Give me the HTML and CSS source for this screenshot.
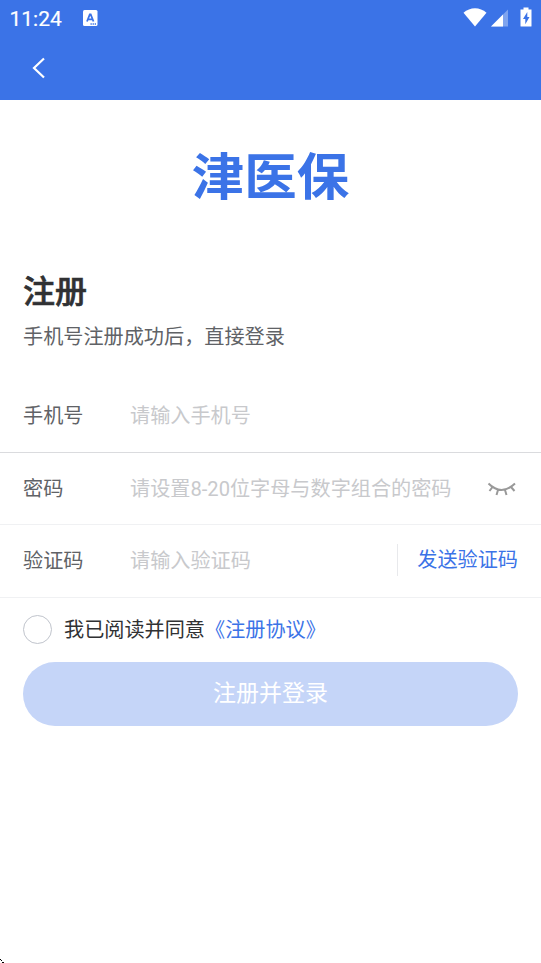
FILE: index.html
```html
<!DOCTYPE html>
<html lang="zh-CN">
<head>
<meta charset="utf-8">
<title>注册</title>
<link rel="stylesheet" href="styles.css">
</head>
<body>
<header class="top">
  <div class="status">
    <span class="clock">11:24</span>
    <svg class="badge" width="15" height="16" viewBox="0 0 15 16"><rect width="14.5" height="16" rx="1.5" fill="#fff"/><path d="M4 11.5 6.8 4.5h.9l2.8 7M5 9.3h4.5" fill="none" stroke="#3b73e7" stroke-width="1.8"/><path d="M7.5 14h6" stroke="#3b73e7" stroke-width="1.5" stroke-dasharray="1.3 .8"/></svg>
    <svg class="signals" width="70" height="22" viewBox="0 0 70 22"><path d="M.5 5.8C7-.2 17-.2 23.500 5.800L12 19.500Z" fill="#fff"/><path d="M28 19.500 45 2.500V19.500Z" fill="#fff" opacity=".35"/><path d="M28 19.500 40 7.500V19.500Z" fill="#fff"/><path d="M57.500 2.500h3v-2h5v2h3V19q0 .5-.5.5h-10q-.5 0-.5-.5Z" fill="#fff"/><path d="M64.300 5 60 12h2.300v5.300L66.500 10h-2.200Z" fill="#3b73e7"/></svg>
  </div>
  <div class="nav"><svg width="14" height="22" viewBox="0 0 14 22"><path d="M12 1.500 2 11l10 9.500" fill="none" stroke="#fff" stroke-width="2.200"/></svg></div>
</header>
<main>
  <div class="logo">津医保</div>
  <h1>注册</h1>
  <p class="intro">手机号注册成功后，直接登录</p>
  <div class="row phone"><span class="label">手机号</span><span class="hint">请输入手机号</span></div>
  <div class="row"><span class="label">密码</span><span class="hint">请设置8-20位字母与数字组合的密码</span>
    <svg class="eye" width="30" height="16" viewBox="0 0 30 16"><path d="M1.500 2.500Q14.500 15.500 28 2.500M5.500 6 2.500 10M11 9 9.500 14M18 9l1.500 5M24 6l3.500 4" fill="none" stroke="#999" stroke-width="2"/></svg>
  </div>
  <div class="row code"><span class="label">验证码</span><span class="hint">请输入验证码</span><span class="send">发送验证码</span></div>
  <div class="agree"><span class="radio"></span><span class="terms">我已阅读并同意<a>《注册协议》</a></span></div>
  <div class="submit">注册并登录</div>
</main>
<svg class="corner" width="4" height="4" viewBox="0 0 4 4"><path d="M0 0h1v1h1v1H1V1H0ZM2 3h2v1H2Z" fill="#000"/></svg>
</body>
</html>
```
FILE: styles.css
```css
* { box-sizing: border-box; }
body {
  margin: 0;
  height: 963px;
  overflow: hidden;
  position: relative;
  background: #fff;
  color: #606266;
  font: 400 20.15px/30px Roboto, "Noto Sans CJK SC", sans-serif;
  white-space: nowrap;
}
.top { height: 100px; background: #3b73e7; color: #fff; }
.status { height: 37px; display: flex; align-items: center; padding: 0 8px 0 9.500px; }
.clock { width: 73px; font-size: 21px; font-weight: 400; -webkit-text-stroke: .2px; }
.badge { margin-top: -1px; }
.signals { margin-left: auto; margin-top: -1px; }
.nav { padding: 20px 0 0 32px; height: 63px; }
.nav svg { display: block; }
.logo {
  height: 154px;
  padding-top: 40px;
  text-align: center;
  font-size: 53px;
  line-height: 76px;
  font-weight: 700;
  color: #3b73e7;
  transform: scale(.99, .94);
}
h1 { margin: 0; padding: 14px 23px 0; font-size: 32px; line-height: 48px; height: 68px; font-weight: 500; -webkit-text-stroke: .6px; color: #303133; }
.intro { margin: 0; padding-left: 23px; height: 58px; }
.row {
  height: 72px;
  display: flex;
  align-items: center;
  padding: 0 23px;
  border-bottom: 1px solid #f0f1f3;
}
.phone { height: 73px; border-color: #dadbde; }
.code { height: 73px; }
.label { width: 107px; }
.hint { color: #c8c9cc; }
.eye { margin-left: auto; margin-right: 1px; }
.send { margin: -2px 0 0 auto; padding-left: 19.500px; border-left: 1px solid #e8e9ec; color: #3b73e7; line-height: 32px; }
.agree { height: 64px; display: flex; align-items: center; padding: 0 23px; color: #303133; }
.radio { width: 29px; height: 29px; margin: -2px 12px 0 0; border: 1.500px solid #c0c4cc; border-radius: 50%; }
.agree a { color: #3b73e7; }
.submit { height: 64px; margin: 0 23px; border-radius: 32px; background: #c5d5f8; color: #fff; text-align: center; font-size: 23px; line-height: 64px; }
.corner { position: absolute; left: 0; bottom: 0; }
```
